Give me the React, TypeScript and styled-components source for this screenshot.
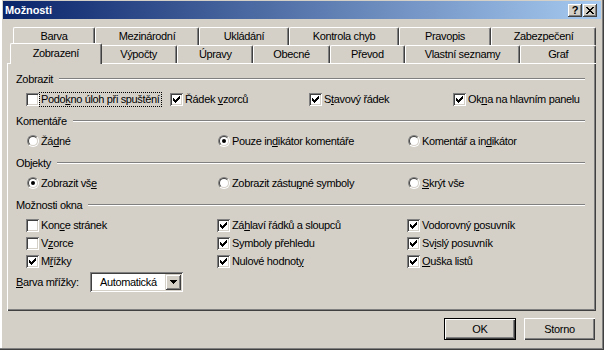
import React from 'react';
import styled, { createGlobalStyle } from 'styled-components';

// Windows 2000 palette
const FACE = '#d4d0c8';
const SHADOW = '#808080';
const DARK = '#404040';

const GlobalStyle = createGlobalStyle`
  html, body {
    margin: 0;
    padding: 0;
    background: ${FACE};
  }
  body {
    font-family: 'Liberation Sans', Arial, sans-serif;
    font-size: 11px;
    color: #000;
  }
`;

const Dialog = styled.div`
  width: 604px;
  height: 350px;
  box-sizing: border-box;
  background: ${FACE};
  padding: 1px 3px 3px 3px;
  box-shadow: inset -1px -1px ${DARK}, inset -2px -2px ${SHADOW}, inset 2px 0 #fff;
  display: flex;
  flex-direction: column;
`;

const TitleBar = styled.div`
  height: 18px;
  display: flex;
  align-items: center;
  padding: 0 4px 0 2px;
  background: linear-gradient(to right, #0a246a, #a6caf0);
  color: #fff;
`;

const TitleText = styled.span`
  font-weight: bold;
  font-size: 11px;
  letter-spacing: -0.1px;
`;

const CaptionButtons = styled.div`
  margin-left: auto;
  display: flex;
  gap: 1px;
`;

const CaptionButton = styled.div`
  width: 14px;
  height: 13px;
  box-sizing: border-box;
  background: ${FACE};
  box-shadow: inset -1px -1px ${DARK}, inset 1px 1px #fff, inset -2px -2px ${SHADOW};
  color: #000;
  display: flex;
  align-items: center;
  justify-content: center;
  font-weight: bold;
  font-size: 11px;
  line-height: 1;
`;

const Body = styled.div`
  flex: 1;
  display: flex;
  flex-direction: column;
  padding: 0 5px 0 4px;
`;

const TabStrip = styled.div`
  margin-top: 9px;
  display: flex;
  flex-direction: column;
`;

const TabRow = styled.div<{ $indent: number; $h: number }>`
  display: flex;
  align-items: flex-end;
  height: ${({ $h }) => $h}px;
  padding-left: ${({ $indent }) => $indent}px;
`;

const Tab = styled.div<{ $w: number; $active?: boolean }>`
  width: ${({ $w, $active }) => ($active ? $w + 4 : $w)}px;
  height: ${({ $active }) => ($active ? 21 : 18)}px;
  margin: ${({ $active }) => ($active ? '0 -2px -1px -2px' : '0')};
  position: relative;
  z-index: ${({ $active }) => ($active ? 2 : 1)};
  box-sizing: border-box;
  background: ${FACE};
  border-top: 1px solid #fff;
  border-left: 1px solid #fff;
  border-right: 1px solid ${DARK};
  box-shadow: inset -1px 0 ${SHADOW};
  border-radius: 2px 2px 0 0;
  display: flex;
  align-items: center;
  justify-content: center;
  padding-bottom: ${({ $active }) => ($active ? 2 : 0)}px;
  white-space: nowrap;
`;

const Panel = styled.div`
  height: 248px;
  box-sizing: border-box;
  padding: 8px 11px 0 9px;
  box-shadow: inset 1px 1px #fff, inset -1px -1px ${DARK}, inset -2px -2px ${SHADOW};
  display: flex;
  flex-direction: column;
`;

const Section = styled.div<{ $first?: boolean }>`
  margin-top: ${({ $first }) => ($first ? 0 : 5)}px;
  display: flex;
  flex-direction: column;
`;

const SectionHeader = styled.div`
  height: 16px;
  display: flex;
  align-items: center;
`;

const Etched = styled.div`
  flex: 1;
  margin-left: 6px;
  border-top: 1px solid ${SHADOW};
  border-bottom: 1px solid #fff;
`;

const OptionGrid = styled.div<{ $cols: string }>`
  display: grid;
  grid-template-columns: ${({ $cols }) => $cols};
  grid-auto-rows: 18px;
  padding-left: 10px;
  margin-top: 3px;
`;

const Option = styled.div<{ $gap: number }>`
  display: flex;
  align-items: center;
  gap: ${({ $gap }) => $gap}px;
  white-space: nowrap;
`;

const CheckBox = styled.span`
  width: 13px;
  height: 13px;
  flex: none;
  background: #fff;
  box-shadow: inset 1px 1px ${SHADOW}, inset -1px -1px #fff, inset 2px 2px ${DARK}, inset -2px -2px ${FACE};
  svg {
    display: block;
  }
`;

const RadioOuter = styled.span`
  width: 12px;
  height: 12px;
  flex: none;
  box-sizing: border-box;
  border-radius: 50%;
  border: 1px solid;
  border-color: ${SHADOW} #fff #fff ${SHADOW};
  margin-left: 1px;
`;

const RadioInner = styled.span`
  display: flex;
  align-items: center;
  justify-content: center;
  width: 100%;
  height: 100%;
  box-sizing: border-box;
  border-radius: 50%;
  border: 1px solid;
  border-color: ${DARK} ${FACE} ${FACE} ${DARK};
  background: #fff;
`;

const RadioDot = styled.span`
  width: 4px;
  height: 4px;
  border-radius: 50%;
  background: #000;
`;

const Label = styled.span<{ $focus?: boolean }>`
  line-height: 13px;
  letter-spacing: -0.35px;
  ${({ $focus }) =>
    $focus
      ? `outline: 1px dotted #000; outline-offset: 0; padding: 0 2px 0 1px;`
      : ''}
`;

const Key = styled.span`
  text-decoration: underline;
  text-underline-offset: 1px;
`;

const ColorRow = styled.div`
  display: grid;
  grid-template-columns: 74px 93px;
  align-items: center;
  margin-top: 2px;
  height: 20px;
`;

const Select = styled.div`
  height: 20px;
  box-sizing: border-box;
  background: #fff;
  box-shadow: inset 1px 1px ${SHADOW}, inset -1px -1px #fff, inset 2px 2px ${DARK}, inset -2px -2px ${FACE};
  padding: 2px;
  display: flex;
  align-items: center;
`;

const SelectValue = styled.span`
  flex: 1;
  padding-left: 8px;
  letter-spacing: -0.35px;
`;

const DropButton = styled.span`
  width: 16px;
  height: 16px;
  box-sizing: border-box;
  background: ${FACE};
  box-shadow: inset 1px 1px ${FACE}, inset -1px -1px ${DARK}, inset 2px 2px #fff, inset -2px -2px ${SHADOW};
  display: flex;
  align-items: center;
  justify-content: center;
  svg {
    display: block;
  }
`;

const Footer = styled.div`
  display: flex;
  justify-content: flex-end;
  gap: 8px;
  margin-top: 7px;
  padding-right: 1px;
`;

const PushButton = styled.div<{ $default?: boolean; $w: number }>`
  width: ${({ $w }) => $w}px;
  height: 22px;
  box-sizing: border-box;
  background: ${FACE};
  display: flex;
  align-items: center;
  justify-content: center;
  letter-spacing: -0.3px;
  border: ${({ $default }) => ($default ? '1px solid #000' : 'none')};
  box-shadow: ${({ $default }) =>
    $default
      ? `inset 1px 1px #fff, inset -1px -1px ${DARK}, inset -2px -2px ${SHADOW}`
      : `inset 1px 1px #fff, inset -1px -1px ${DARK}, inset -2px -2px ${SHADOW}, inset 2px 2px ${FACE}`};
`;

const CheckMark = () => (
  <svg width="13" height="13" viewBox="0 0 13 13" shapeRendering="crispEdges">
    <path
      d="M3 5h1v3h-1z M4 6h1v3h-1z M5 7h1v3h-1z M6 6h1v3h-1z M7 5h1v3h-1z M8 4h1v3h-1z M9 3h1v3h-1z"
      fill="#000"
    />
  </svg>
);

const CloseGlyph = () => (
  <svg width="8" height="7" viewBox="0 0 8 7" shapeRendering="crispEdges">
    <path
      d="M0 0h2v1h-2z M6 0h2v1h-2z M1 1h2v1h-2z M5 1h2v1h-2z M2 2h4v1h-4z M3 3h2v1h-2z M2 4h4v1h-4z M1 5h2v1h-2z M5 5h2v1h-2z M0 6h2v1h-2z M6 6h2v1h-2z"
      fill="#000"
    />
  </svg>
);

const DownArrow = () => (
  <svg width="7" height="4" viewBox="0 0 7 4" shapeRendering="crispEdges">
    <path d="M0 0h7v1h-7z M1 1h5v1h-5z M2 2h3v1h-3z M3 3h1v1h-1z" fill="#000" />
  </svg>
);

// text with one underlined access key: [before, key, after]
type Text = [string, string, string];

const Mnemonic: React.FC<{ t: Text }> = ({ t }) => (
  <>
    {t[0]}
    {t[1] && <Key>{t[1]}</Key>}
    {t[2]}
  </>
);

const Check: React.FC<{ checked?: boolean; t: Text; focus?: boolean }> = ({ checked, t, focus }) => (
  <Option $gap={focus ? 1 : 2}>
    <CheckBox>{checked && <CheckMark />}</CheckBox>
    <Label $focus={focus}>
      <Mnemonic t={t} />
    </Label>
  </Option>
);

const Radio: React.FC<{ checked?: boolean; t: Text }> = ({ checked, t }) => (
  <Option $gap={2}>
    <RadioOuter>
      <RadioInner>{checked && <RadioDot />}</RadioInner>
    </RadioOuter>
    <Label>
      <Mnemonic t={t} />
    </Label>
  </Option>
);

const backTabs: [string, number][] = [
  ['Barva', 82],
  ['Mezinárodní', 104],
  ['Ukládání', 90],
  ['Kontrola chyb', 110],
  ['Pravopis', 92],
  ['Zabezpečení', 105],
];

const frontTabs: [string, number][] = [
  ['Zobrazení', 88],
  ['Výpočty', 78],
  ['Úpravy', 76],
  ['Obecné', 77],
  ['Převod', 75],
  ['Vlastní seznamy', 116],
  ['Graf', 76],
];

const SectionTitle: React.FC<{ title: string }> = ({ title }) => (
  <SectionHeader>
    <Label>{title}</Label>
    <Etched />
  </SectionHeader>
);

const App: React.FC = () => {
  return (
    <>
      <GlobalStyle />
      <Dialog>
        <TitleBar>
          <TitleText>Možnosti</TitleText>
          <CaptionButtons>
            <CaptionButton>?</CaptionButton>
            <CaptionButton>
              <CloseGlyph />
            </CaptionButton>
          </CaptionButtons>
        </TitleBar>

        <Body>
          <TabStrip>
            <TabRow $indent={6} $h={17}>
              {backTabs.map(([name, w]) => (
                <Tab key={name} $w={w}>
                  <Label>{name}</Label>
                </Tab>
              ))}
            </TabRow>
            <TabRow $indent={5} $h={18}>
              {frontTabs.map(([name, w], i) => (
                <Tab key={name} $w={w} $active={i === 0}>
                  <Label>{name}</Label>
                </Tab>
              ))}
            </TabRow>
          </TabStrip>

          <Panel>
            <Section $first>
              <SectionTitle title="Zobrazit" />
              <OptionGrid $cols="144px 139px 144px 1fr">
                <Check focus t={['Podo', 'k', 'no úloh při spuštění']} />
                <Check checked t={['Řádek ', 'v', 'zorců']} />
                <Check checked t={['S', 't', 'avový řádek']} />
                <Check checked t={['Ok', 'n', 'a na hlavním panelu']} />
              </OptionGrid>
            </Section>

            <Section>
              <SectionTitle title="Komentáře" />
              <OptionGrid $cols="191px 190px 1fr">
                <Radio t={['Žá', 'd', 'né']} />
                <Radio checked t={['Pouze in', 'd', 'ikátor komentáře']} />
                <Radio t={['Komentář a in', 'd', 'ikátor']} />
              </OptionGrid>
            </Section>

            <Section>
              <SectionTitle title="Objekty" />
              <OptionGrid $cols="191px 190px 1fr">
                <Radio checked t={['Zobrazit vš', 'e', '']} />
                <Radio t={['Zobrazit zástu', 'p', 'né symboly']} />
                <Radio t={['', 'S', 'krýt vše']} />
              </OptionGrid>
            </Section>

            <Section>
              <SectionTitle title="Možnosti okna" />
              <OptionGrid $cols="191px 190px 1fr">
                <Check t={['Kon', 'c', 'e stránek']} />
                <Check checked t={['Zá', 'h', 'laví řádků a sloupců']} />
                <Check checked t={['Vodorovný ', 'p', 'osuvník']} />
                <Check t={['V', 'z', 'orce']} />
                <Check checked t={['Symboly přehledu', '', '']} />
                <Check checked t={['Sv', 'i', 'slý posuvník']} />
                <Check checked t={['M', 'ř', 'ížky']} />
                <Check checked t={['Nulové hodnot', 'y', '']} />
                <Check checked t={['', 'O', 'uška listů']} />
              </OptionGrid>
              <ColorRow>
                <Label>
                  <Key>B</Key>arva mřížky:
                </Label>
                <Select>
                  <SelectValue>Automatická</SelectValue>
                  <DropButton>
                    <DownArrow />
                  </DropButton>
                </Select>
              </ColorRow>
            </Section>
          </Panel>

          <Footer>
            <PushButton $default $w={72}>
              OK
            </PushButton>
            <PushButton $w={71}>Storno</PushButton>
          </Footer>
        </Body>
      </Dialog>
    </>
  );
};

export default App;
